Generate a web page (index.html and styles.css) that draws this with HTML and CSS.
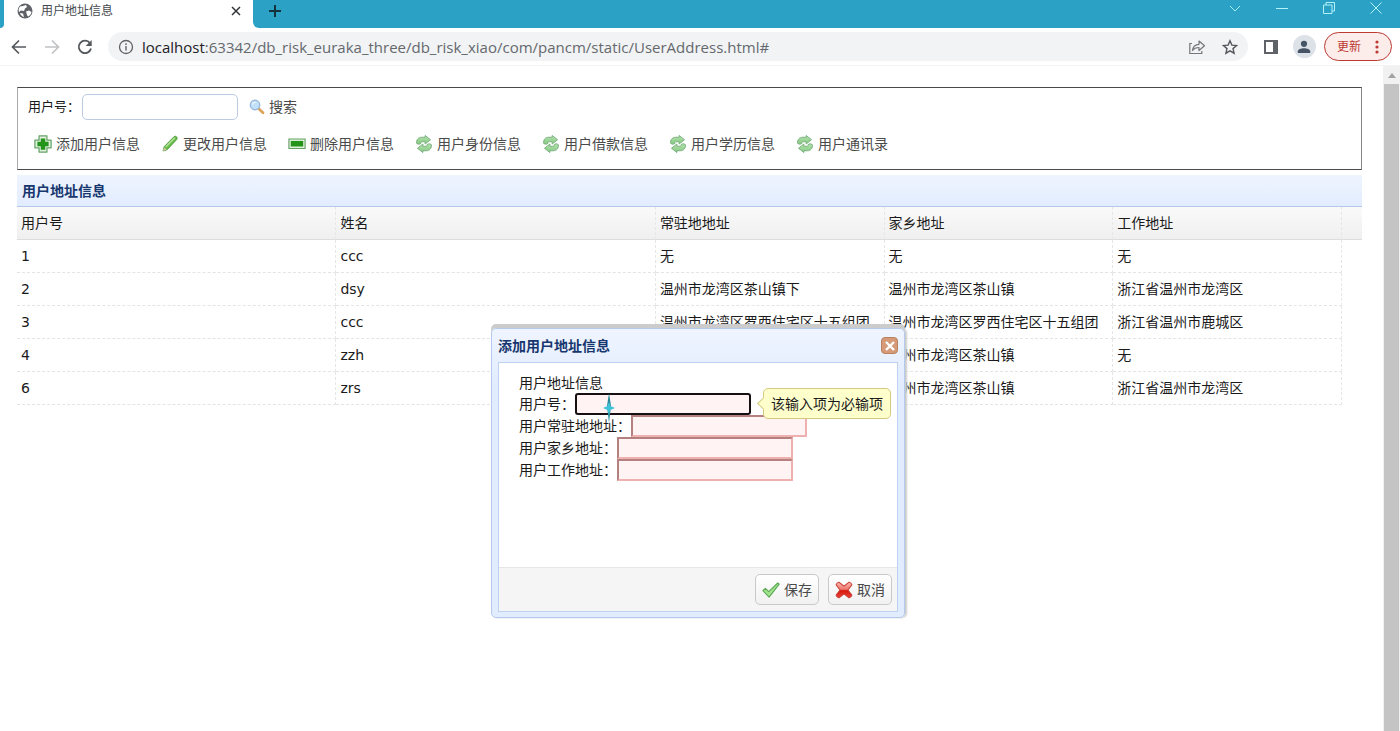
FILE: index.html
```html
<!DOCTYPE html>
<html lang="zh-CN">
<head>
<meta charset="utf-8">
<title>用户地址信息</title>
<link rel="stylesheet" href="styles.css">
</head>
<body>
<svg class="defs" aria-hidden="true">
  <defs>
    <linearGradient id="leaf" x1="0" y1="0" x2="0" y2="1"><stop offset="0" stop-color="#b3e2ad"/><stop offset="1" stop-color="#86c882"/></linearGradient>
    <linearGradient id="red" x1="0" y1="0" x2="0" y2="1"><stop offset="0" stop-color="#f9b5ae"/><stop offset=".45" stop-color="#ee7a70"/><stop offset=".55" stop-color="#d8150c"/><stop offset="1" stop-color="#e8493f"/></linearGradient>
  </defs>
  <symbol id="i-reload" viewBox="0 0 16 16">
    <g fill="url(#leaf)" stroke="#74ad78" stroke-width=".8" stroke-linejoin="round">
      <path d="M1.500 7.500C1 4.200 3 2 6 2h3V.4L13.800 4.200 9 8V6H6.500C5.300 6 5 6.500 5.200 7.500L3.500 8.300z"/>
      <path d="M14.500 8.500c.5 3.300-1.500 5.500-4.500 5.500H7v1.600L2.200 11.800 7 8v2h2.500c1.200 0 1.500-.5 1.300-1.500l1.700-.8z"/>
    </g>
  </symbol>
</svg>

<header class="browser">
  <div class="tabstrip">
    <div class="prev-tab"></div>
    <div class="tab">
      <svg class="globe" viewBox="0 0 16 16"><circle cx="8" cy="8" r="7.500" fill="#5f6368"/><path d="M3 3.500C5 3 7 3 9 2l1 2-2 1.500-1 2.500-3-.5-2 1.500C1 7 2 5 3 3.500zM9 8.500l3-1 2.500 1.500c-.3 2-1.500 3.600-3.500 4.600l-1-1.600zM3 10l3 .5 1 3.500C5 13.600 3.500 12 3 10z" fill="#fff"/></svg>
      <span class="tab-title">用户地址信息</span>
      <button class="plain" aria-label="关闭标签页"><svg class="s10" viewBox="0 0 10 10"><path d="M1 1l8 8M9 1L1 9" stroke="#303438" stroke-width="1.500"/></svg></button>
    </div>
    <button class="plain new-tab" aria-label="新标签页"><svg class="s12" viewBox="0 0 12 12"><path d="M6 0v12M0 6h12" stroke="#12333d" stroke-width="2"/></svg></button>
    <div class="win-controls">
      <button class="plain" aria-label="搜索标签页"><svg class="s12" viewBox="0 0 12 12"><path d="M1 4l5 5 5-5" fill="none" stroke="#a5edf8"/></svg></button>
      <button class="plain" aria-label="最小化"><svg class="s12" viewBox="0 0 12 12"><path d="M0 6.500h12" stroke="#b5f1fa"/></svg></button>
      <button class="plain" aria-label="还原"><svg class="s12" viewBox="0 0 12 12"><path d="M.5 3h8.500v8.500H.500zM3 3V.500h8.500V9H9" fill="none" stroke="#b5f1fa"/></svg></button>
      <button class="plain" aria-label="关闭"><svg class="s12" viewBox="0 0 12 12"><path d="M.5.5l11 11M11.500.500l-11 11" stroke="#b5f1fa"/></svg></button>
    </div>
  </div>
  <div class="navbar">
    <button class="plain" aria-label="后退"><svg class="s16" viewBox="0 0 16 16"><path d="M15 8H2M8 1.500L1.500 8 8 14.500" fill="none" stroke="#54585d" stroke-width="1.700"/></svg></button>
    <button class="plain" aria-label="前进"><svg class="s16" viewBox="0 0 16 16"><path d="M1 8h13M8 1.500L14.500 8 8 14.500" fill="none" stroke="#c0c2c5" stroke-width="1.700"/></svg></button>
    <button class="plain" aria-label="刷新"><svg class="s16" viewBox="0 0 16 16"><path d="M13 4.200A6.200 6.200 0 1 0 14 9.500" fill="none" stroke="#54585d" stroke-width="1.800"/><path d="M14.700 1v6h-6z" fill="#54585d"/></svg></button>
    <div class="omnibox">
      <svg class="s16" viewBox="0 0 16 16"><circle cx="8" cy="8" r="6.500" fill="none" stroke="#5f6368" stroke-width="1.300"/><path d="M8 7v4.500M8 4.300v1.600" stroke="#5f6368" stroke-width="1.400"/></svg>
      <span class="url"><b>localhost</b>:63342/db_risk_euraka_three/db_risk_xiao/com/pancm/static/UserAddress.html#</span>
      <button class="plain" aria-label="分享"><svg class="s16" viewBox="0 0 16 16"><path d="M3 4.500H.8V14.500h12V12" fill="none" stroke="#74787c" stroke-width="1.200"/><path d="M3.500 11.500c.5-4 2.500-6 6.500-6.200V2L15.500 6.800 10 11.500V8.500C7 8.400 5 9.500 3.500 11.500z" fill="none" stroke="#74787c" stroke-width="1.200" stroke-linejoin="round"/></svg></button>
      <button class="plain" aria-label="收藏"><svg class="s16" viewBox="0 0 16 16"><path d="M8 1.800l1.900 4.300 4.700.4-3.600 3.100 1.100 4.600L8 11.800l-4.100 2.400L5 9.600 1.400 6.500l4.700-.4z" fill="none" stroke="#54585d" stroke-width="1.400"/></svg></button>
    </div>
    <button class="plain" aria-label="侧边栏"><svg class="s16" viewBox="0 0 16 16"><path d="M1 1h14v14H1zM3 3v10h7V3z" fill="#5f6368" fill-rule="evenodd"/></svg></button>
    <button class="plain avatar" aria-label="个人资料"><svg class="s14" viewBox="0 0 14 14"><circle cx="7" cy="3.800" r="3.100" fill="#475366"/><path d="M.8 13v-1.500C.8 9 4 8.200 7 8.200s6.200.8 6.200 3.300V13z" fill="#475366"/></svg></button>
    <button class="update">更新<svg class="dots" viewBox="0 0 4 14"><g fill="#bd3a33"><circle cx="2" cy="2" r="1.600"/><circle cx="2" cy="7" r="1.600"/><circle cx="2" cy="12" r="1.600"/></g></svg></button>
  </div>
</header>

<div class="viewport">
  <main class="page">
    <section class="toolbar">
      <form class="search-row">
        <label for="q">用户号：</label>
        <input id="q" class="search-input" type="text">
        <button type="button" class="link-btn"><svg class="s16" viewBox="0 0 16 16"><path d="M9.500 9.500l4.500 4.300" stroke="#dda45c" stroke-width="2.800" stroke-linecap="round"/><circle cx="6" cy="6" r="4.700" fill="#c3e1fa" stroke="#9bb9dc" stroke-width="1.400"/><path d="M3.500 5.500a2.800 2.800 0 0 1 3-2.200" stroke="#fff" fill="none"/></svg>搜索</button>
      </form>
      <div class="actions">
        <button class="link-btn"><svg class="s18" viewBox="0 0 16 16"><path d="M4.500.8h7v3.700h3.700v7h-3.700v3.700h-7v-3.700H.8v-7h3.700z" fill="#e2f1df" stroke="#67a267" stroke-width="1.100" stroke-linejoin="round"/><path d="M6 3h4v3h3v4h-3v3H6v-3H3V6h3z" fill="#24941b"/></svg>添加用户信息</button>
        <button class="link-btn"><svg class="s18" viewBox="0 0 16 16"><path d="M1.800 14.200l1-3.800L11.500 1.500q1.200-.9 2.300.1t.2 2.400L5.500 13z" fill="#68bd4c" stroke="#4a9a3a" stroke-width=".8"/><path d="M4.300 10.500l8-8" stroke="#b5e39a" stroke-width="1.200"/><path d="M1.800 14.200l.9-3.300 2.300 2.200z" fill="#d7c8a5"/></svg>更改用户信息</button>
        <button class="link-btn"><svg class="s18" viewBox="0 0 16 16"><path d="M.8 3.500h14.400v8.500H.800z" fill="#def0da" stroke="#67a267"/><path d="M2.500 5.300h11v4.900h-11z" fill="#24941b"/></svg>删除用户信息</button>
        <button class="link-btn"><svg class="s18"><use href="#i-reload"/></svg>用户身份信息</button>
        <button class="link-btn"><svg class="s18"><use href="#i-reload"/></svg>用户借款信息</button>
        <button class="link-btn"><svg class="s18"><use href="#i-reload"/></svg>用户学历信息</button>
        <button class="link-btn"><svg class="s18"><use href="#i-reload"/></svg>用户通讯录</button>
      </div>
    </section>

    <section class="panel">
      <h2 class="panel-title">用户地址信息</h2>
      <table class="grid">
        <colgroup><col class="c-wide"><col class="c-wide"><col class="c-addr"><col class="c-addr"><col class="c-addr"><col></colgroup>
        <thead><tr><th>用户号</th><th>姓名</th><th>常驻地地址</th><th>家乡地址</th><th>工作地址</th><th></th></tr></thead>
        <tbody>
          <tr><td>1</td><td>ccc</td><td>无</td><td>无</td><td>无</td></tr>
          <tr><td>2</td><td>dsy</td><td>温州市龙湾区茶山镇下</td><td>温州市龙湾区茶山镇</td><td>浙江省温州市龙湾区</td></tr>
          <tr><td>3</td><td>ccc</td><td>温州市龙湾区罗西住宅区十五组团</td><td>温州市龙湾区罗西住宅区十五组团</td><td>浙江省温州市鹿城区</td></tr>
          <tr><td>4</td><td>zzh</td><td>温州市龙湾区茶山镇</td><td>温州市龙湾区茶山镇</td><td>无</td></tr>
          <tr><td>6</td><td>zrs</td><td>温州市龙湾区茶山镇</td><td>温州市龙湾区茶山镇</td><td>浙江省温州市龙湾区</td></tr>
        </tbody>
      </table>
    </section>

    <div class="dialog" role="dialog" aria-labelledby="dlg-title">
      <div class="dialog-head">
        <h2 id="dlg-title">添加用户地址信息</h2>
        <button class="close" aria-label="关闭"><svg class="s10" viewBox="0 0 10 10"><path d="M1 1l8 8M9 1L1 9" stroke="#fff" stroke-width="2.400"/></svg></button>
      </div>
      <div class="dialog-body">
        <form class="form">
          <div class="form-title">用户地址信息</div>
          <div class="field"><label for="f1">用户号：</label><input id="f1" class="focused" type="text"></div>
          <div class="field"><label for="f2">用户常驻地地址：</label><input id="f2" type="text"></div>
          <div class="field"><label for="f3">用户家乡地址：</label><input id="f3" type="text"></div>
          <div class="field"><label for="f4">用户工作地址：</label><input id="f4" type="text"></div>
          <div class="tip" role="tooltip">该输入项为必输项</div>
          <svg class="pointer" viewBox="0 0 12 30"><path d="M6 0l2 13-2 17-2-17z" fill="#258b9b"/><path d="M0 15l4.500-2L6 9l1.500 4L12 15l-4.500 2L6 21l-1.500-4z" fill="#3fc3d8"/></svg>
        </form>
        <div class="dialog-foot">
          <button class="btn"><svg class="s18" viewBox="0 0 16 16"><path d="M.8 8.500L3 6.500l3 3L14 1.800l1.300 1L6.300 14.300z" fill="#a3e38c" stroke="#5aa955" stroke-width="1" stroke-linejoin="round"/></svg>保存</button>
          <button class="btn"><svg class="s18" viewBox="0 0 16 16"><path d="M1 3.500Q1.500 1.500 3.500 1L8 4.500 12.500 1Q14.500 1.500 15 3.500L11.500 8l3.500 4.500q-.5 2-2.500 2.500L8 11.500 3.500 15Q1.500 14.500 1 12.500L4.500 8z" fill="url(#red)" stroke="#c9392f" stroke-width=".9" stroke-linejoin="round"/></svg>取消</button>
        </div>
      </div>
    </div>
  </main>
  <div class="scrollbar" aria-hidden="true"><div class="scroll-up"></div><div class="scroll-thumb"></div></div>
</div>
</body>
</html>
```
FILE: styles.css
```css
* { box-sizing: border-box; }
body {
  margin: 0;
  min-height: 100vh;
  display: flex;
  flex-direction: column;
  background: #fff;
  color: #1a1a1a;
  font: 14px/20px "DejaVu Sans", "Noto Sans CJK SC", sans-serif;
}
button, input { font: inherit; color: inherit; margin: 0; }
button { display: inline-flex; align-items: center; justify-content: center; }
svg { display: block; flex: none; }
h2 { margin: 0; font-size: 14px; line-height: 20px; color: #17376e; }
.defs { position: absolute; width: 0; height: 0; }
.s10 { width: 10px; height: 10px; }
.s12 { width: 12px; height: 12px; }
.s14 { width: 14px; height: 14px; }
.s16 { width: 16px; height: 16px; }
.s18 { width: 18px; height: 18px; }
.plain { border: 0; padding: 0; background: none; }

/* browser chrome */
.tabstrip { display: flex; height: 28px; background: linear-gradient(#fff, #fff) 0 0 / 16px 100% no-repeat #2ba2c5; }
.prev-tab { width: 4px; border-radius: 0 0 4px 0; background: #2ba2c5; }
.tab {
  width: 249px;
  display: flex;
  align-items: center;
  padding: 0 12px 6px 13px;
  background: linear-gradient(#fff, #fff);
  box-shadow: 6px 0 0 #fff;
}
.globe { width: 16px; height: 16px; }
.tab-title { flex: 1; margin-left: 8px; font-size: 12px; color: #45494d; }
.new-tab {
  position: relative;
  width: 44px;
  padding-bottom: 6px;
  background: #2ba2c5;
  border-radius: 0 0 0 6px;
}
.win-controls { margin-left: auto; display: flex; gap: 35px; padding: 2px 18px 14px 0; }
.navbar {
  display: flex;
  align-items: center;
  gap: 17px;
  height: 38px;
  padding: 0 8px 0 11px;
  background: #fff;
  border-bottom: 1px solid #f4f4f4;
}
.omnibox {
  flex: 1;
  display: flex;
  align-items: center;
  gap: 17px;
  height: 29px;
  padding: 0 10px;
  margin: 0 -2px;
  border-radius: 15px;
  background: #f1f3f4;
}
.url {
  flex: 1;
  margin-left: -9px;
  font: 15px/20px "Open Sans", "Noto Sans", sans-serif;
  color: #65696e;
  white-space: nowrap;
  overflow: hidden;
}
.url b { font-weight: 400; color: #202124; }
.avatar { width: 23px; height: 23px; margin: 0 -9px 0 -3px; border-radius: 50%; background: #dde1e8; }
.update {
  gap: 14px;
  height: 29px;
  padding: 0 12px;
  border: 1px solid #bd3a33;
  border-radius: 15px;
  background: #fcecea;
  color: #bd3a33;
  font-size: 12px;
}
.dots { width: 4px; height: 14px; }

/* page */
.viewport { flex: 1; display: flex; }
.page { position: relative; flex: 1; min-width: 0; padding: 21px 21px 0 17px; }
.scrollbar { width: 17px; display: flex; flex-direction: column; background: #f1f1f1; }
.scroll-up { height: 18px; display: flex; align-items: center; justify-content: center; }
.scroll-up::before { content: ""; border: 4px solid transparent; border-top: 0; border-bottom: 5px solid #a3a3a3; }
.scroll-thumb { flex: 1; margin: 0 1px; background: #c4c4c4; }

.toolbar { height: 83px; padding: 6px 10px; border: 1px solid #4a4a4a; border-left-color: #aaa; border-right-color: #888; }
.search-row { display: flex; align-items: center; font-size: 13px; }
.search-input {
  width: 156px;
  height: 26px;
  margin: 0 11px 0 2px;
  padding: 0 4px;
  border: 1px solid #bccbe3;
  border-radius: 5px;
  background: #fff;
}
.link-btn { gap: 4px; padding: 0; border: 0; background: none; font-size: 14px; color: #4a4a4a; }
.actions { display: flex; gap: 20px; padding: 14px 0 0 6px; }
.actions .link-btn { padding-right: 1px; }
.panel { margin-top: 5px; }
.panel-title {
  padding: 6px 5px 5px;
  background: linear-gradient(#eff5ff, #e2ecff);
  border-bottom: 1px solid #b4c8ea;
}
.grid { width: 100%; table-layout: fixed; border-collapse: separate; border-spacing: 0; }
.c-wide { width: 23.75%; }
.c-addr { width: 17%; }
.grid th, .grid td {
  height: 33px;
  padding: 0 4px;
  text-align: left;
  font-weight: 400;
  white-space: nowrap;
  overflow: hidden;
  border-right: 1px dashed #e6e6e6;
  border-bottom: 1px dashed #e4e4e4;
}
.grid thead { background: linear-gradient(#fafafa, #efefef); }
.grid th { border-bottom: 1px solid #ddd; }
.grid th:last-child { border-right: 0; }

/* dialog */
.dialog {
  position: absolute;
  top: 262px;
  left: 491px;
  width: 414px;
  padding: 0 6px 5px;
  border: 1px solid #b3caee;
  border-radius: 5px;
  background: linear-gradient(#eff5ff, #e2ecff 20%);
  box-shadow: 2px 0 2px #ccc, 0 -4px 0 #ccc;
}
.dialog-head { display: flex; align-items: center; justify-content: space-between; height: 33px; }
.close { width: 17px; height: 17px; padding: 0; border: 1px solid #b9815f; border-radius: 4px; background: #d69a79; }
.dialog-body { border: 1px solid #bdd2f1; background: #fff; }
.form { position: relative; height: 204px; padding: 10px 20px; }
.form-title { height: 20px; }
.field { display: flex; align-items: center; height: 22px; }
.field input {
  width: 176px;
  height: 22px;
  padding: 0 4px;
  border: 2px solid #efb0b0;
  border-top-color: #b58080;
  border-left-color: #b58080;
  background: #fff3f3;
}
.field .focused { border: 2px solid #161013; border-radius: 3px; outline: 0; }
.tip {
  position: absolute;
  top: 25px;
  left: 264px;
  padding: 5px 7px 4px;
  border: 1px solid #d5c980;
  border-radius: 5px;
  background: #ffffcc;
  white-space: nowrap;
}
.tip::before {
  content: "";
  position: absolute;
  left: -5px;
  top: 10px;
  width: 8px;
  height: 8px;
  border: 1px solid #d5c980;
  border-width: 0 0 1px 1px;
  background: #ffffcc;
  transform: rotate(45deg);
}
.pointer { position: absolute; top: 30px; left: 104px; width: 12px; height: 30px; }
.dialog-foot {
  display: flex;
  justify-content: flex-end;
  gap: 9px;
  padding: 6px 5px;
  border-top: 1px solid #e6e6e6;
  background: #f5f5f5;
}
.btn {
  gap: 4px;
  height: 31px;
  padding: 0 6px;
  border: 1px solid #c9c9c9;
  border-radius: 5px;
  background: linear-gradient(#fff, #f1f1f1);
  color: #4a4a4a;
}
```
